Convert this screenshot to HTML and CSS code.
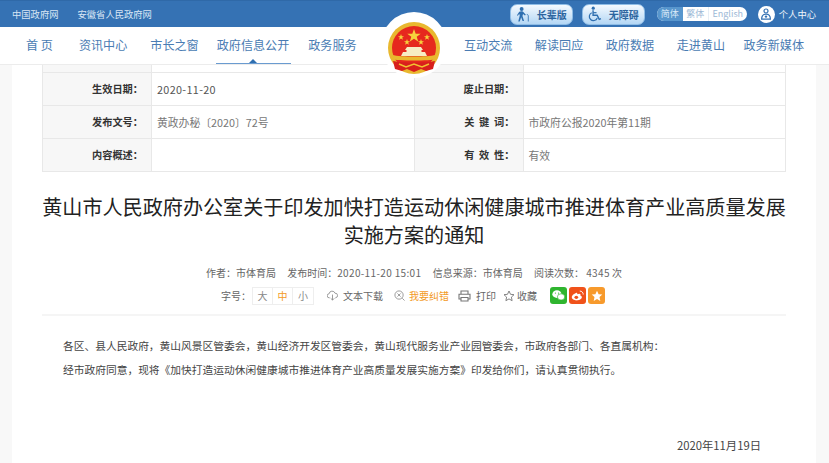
FILE: index.html
```html
<!DOCTYPE html>
<html lang="zh-CN">
<head>
  <meta charset="UTF-8" />
  <title>黄山市人民政府</title>
  <link rel="stylesheet" href="styles.css">
</head>
<body>
  <header class="header">
    <div class="topbar">
      <div class="top-links">
        <a>中国政府网</a>
        <a>安徽省人民政府网</a>
      </div>
      <div class="top-tools">
        <a class="care-btn">
          <svg viewBox="0 0 16 16" width="15" height="16"><circle cx="6" cy="2.6" r="2.1" fill="#2f6fb0"/><path d="M3.5 5.500c2-1 4-.6 4.800 1l2.200 2.300-1 .8-2-1.600-.6 2 1.700 5.400H7L5.500 11.500 4 16H2.400L4 9.500 3.400 7.600 2 9.800 1 9.200z" fill="#2f6fb0"/><path d="M11.500 8.500c1.200 0 1.600.7 1.600 1.600V16" fill="none" stroke="#2f6fb0" stroke-width=".9"/></svg>
          <span>长辈版</span>
        </a>
        <a class="care-btn">
          <svg viewBox="0 0 16 16" width="15" height="16"><circle cx="5.600" cy="1.800" r="1.700" fill="#2f6fb0"/><path d="M5.400 4v5.400h4.400l2.200 4.400 1.800-.8" fill="none" stroke="#2f6fb0" stroke-width="1.500"/><path d="M5.500 6.600h3.600" fill="none" stroke="#2f6fb0" stroke-width="1.300"/><path d="M4 6.600a4.400 4.400 0 1 0 5.900 5.600" fill="none" stroke="#2f6fb0" stroke-width="1.300"/></svg>
          <span>无障碍</span>
        </a>
        <div class="lang">
          <span class="lang-item lang-on">简体</span>
          <span class="lang-item">繁体</span>
          <span class="lang-item lang-en">English</span>
        </div>
        <a class="user">
          <span class="user-icon">
            <svg viewBox="0 0 12 12" width="12" height="12"><circle cx="6" cy="3" r="2" fill="none" stroke="#3572b4" stroke-width="1.200"/><path d="M1.600 11.200c0-3 1.600-5 4.400-5s4.400 2 4.400 5z" fill="none" stroke="#3572b4" stroke-width="1.200"/><circle cx="6" cy="8.600" r="1.200" fill="#3572b4"/></svg>
          </span>
          <span>个人中心</span>
        </a>
      </div>
    </div>
    <nav class="nav">
      <div class="nav-group nav-left">
        <a class="nav-item">首 页</a>
        <a class="nav-item">资讯中心</a>
        <a class="nav-item">市长之窗</a>
        <a class="nav-item nav-tight nav-active">政府信息公开</a>
        <a class="nav-item nav-tight">政务服务</a>
      </div>
      <div class="nav-group nav-right">
        <a class="nav-item">互动交流</a>
        <a class="nav-item">解读回应</a>
        <a class="nav-item">政府数据</a>
        <a class="nav-item">走进黄山</a>
        <a class="nav-item nav-tight">政务新媒体</a>
      </div>
    </nav>
    <div class="emblem">
      <svg viewBox="0 0 54 52" width="54" height="52">
        <circle cx="27" cy="26" r="26" fill="#e9b82f"/>
        <circle cx="27" cy="26" r="22" fill="#e6281e"/>
        <polygon points="27,7 28.700,11.800 33.700,11.800 29.700,14.800 31.200,19.600 27,16.700 22.800,19.600 24.300,14.800 20.300,11.800 25.300,11.800" fill="#f6d23c"/>
        <polygon points="14,12 14.800,14.200 17.100,14.200 15.200,15.600 15.900,17.800 14,16.500 12.100,17.800 12.800,15.600 10.900,14.200 13.200,14.200" fill="#f6d23c"/>
        <polygon points="40,12 40.800,14.200 43.100,14.200 41.200,15.600 41.900,17.800 40,16.500 38.100,17.800 38.800,15.600 36.900,14.200 39.200,14.200" fill="#f6d23c"/>
        <polygon points="20,17 20.800,19.200 23.100,19.200 21.200,20.600 21.900,22.800 20,21.500 18.100,22.800 18.800,20.600 16.900,19.200 19.200,19.200" fill="#f6d23c"/>
        <polygon points="34,17 34.800,19.200 37.100,19.200 35.200,20.600 35.900,22.800 34,21.500 32.100,22.800 32.800,20.600 30.900,19.200 33.200,19.200" fill="#f6d23c"/>
        <path d="M20 25h14l2 3h-1.500v2H38l2 4H14l2-4h3.500v-2H18z" fill="#f7ecc4"/>
        <path d="M4 37c8 2 38 2 46 0l-1-4c-10 2-34 2-44 0z" fill="#e9b82f"/>
        <path d="M6 39c8 2 34 2 42 0l-2 8-7 2-5-2-7 3-7-3-5 2-7-2z" fill="#d8201c"/>
        <path d="M12 42l7 3 8-3 8 3 7-3" fill="none" stroke="#f2c230" stroke-width="1.500"/>
      </svg>
    </div>
  </header>

  <main class="page">
    <table class="info">
      <tr class="info-cut"><td class="lbl"></td><td></td><td class="lbl"></td><td></td></tr>
      <tr><td class="lbl">生效日期：</td><td><span class="num">2020-11-20</span></td><td class="lbl">废止日期：</td><td></td></tr>
      <tr><td class="lbl">发布文号：</td><td class="soft">黄政办秘〔2020〕72号</td><td class="lbl">关 键 词：</td><td class="soft">市政府公报2020年第11期</td></tr>
      <tr><td class="lbl">内容概述：</td><td></td><td class="lbl">有 效 性：</td><td class="soft">有效</td></tr>
    </table>

    <h1 class="title">黄山市人民政府办公室关于印发加快打造运动休闲健康城市推进体育产业高质量发展实施方案的通知</h1>

    <div class="meta">
      <span>作者：市体育局</span>
      <span>发布时间：<span class="num">2020-11-20 15:01</span></span>
      <span>信息来源：市体育局</span>
      <span>阅读次数：&nbsp;<span class="num">4345</span> 次</span>
    </div>

    <div class="tools">
      <span>字号：</span>
      <div class="sizes">
        <span>大</span>
        <span class="size-on">中</span>
        <span>小</span>
      </div>
      <a class="tool tool-down">
        <svg viewBox="0 0 12 12" width="11" height="11"><path d="M3 8.500H2.500a2.200 2.200 0 0 1-.2-4.400 3.300 3.300 0 0 1 6.400-.6 2.500 2.500 0 0 1 .6 5H9M6 5v6M4 9l2 2 2-2" fill="none" stroke="#888" stroke-width=".9"/></svg>
        文本下载
      </a>
      <a class="tool tool-err">
        <svg viewBox="0 0 12 12" width="11" height="11"><circle cx="5.500" cy="5.500" r="4.500" fill="none" stroke="#888" stroke-width=".9"/><path d="M3.800 3.800l3.400 3.400M7.200 3.800L3.800 7.200M9 9l2.500 2.500" fill="none" stroke="#888" stroke-width=".9"/></svg>
        <span class="orange">我要纠错</span>
      </a>
      <a class="tool tool-print">
        <svg viewBox="0 0 13 12" width="13" height="12"><path d="M3 4V1h7v3M3 9H1V4.200h11V9h-2M3 7.500h7V11H3z" fill="none" stroke="#777" stroke-width="1.100"/></svg>
        打印
      </a>
      <a class="tool tool-fav">
        <svg viewBox="0 0 12 12" width="12" height="12"><polygon points="6,1 7.500,4.300 11,4.700 8.400,7.100 9.100,10.700 6,8.900 2.900,10.700 3.600,7.100 1,4.700 4.500,4.300" fill="none" stroke="#777" stroke-width=".9"/></svg>
        收藏
      </a>
      <div class="share">
        <span class="share-btn share-wx">
          <svg viewBox="0 0 14 12" width="13" height="11"><ellipse cx="5.300" cy="4.500" rx="5" ry="4.200" fill="#fff"/><ellipse cx="9.800" cy="7.500" rx="4" ry="3.400" fill="#fff" stroke="#2fb52f" stroke-width=".7"/><circle cx="3.600" cy="3.400" r=".6" fill="#2fb52f"/><circle cx="7" cy="3.400" r=".6" fill="#2fb52f"/></svg>
        </span>
        <span class="share-btn share-wb">
          <svg viewBox="0 0 14 12" width="13" height="11"><path d="M5.800 3C3 4 .5 6.300.8 8.300c.3 2 2.800 3.200 5.600 3 3-.3 5.600-1.700 5.300-3.800-.2-1-1-1.300-1.600-1.500.5-1.300 0-2.200-1.500-2-1 .1-1.500.6-1.700.6-.3 0 .3-2-1.100-1.600z" fill="#fff"/><ellipse cx="5.700" cy="8" rx="2" ry="1.700" fill="#f0521a"/><path d="M9.500 1.200a3.500 3.500 0 0 1 3.700 3.800" fill="none" stroke="#fff" stroke-width="1"/></svg>
        </span>
        <span class="share-btn share-qz">
          <svg viewBox="0 0 12 12" width="12" height="12"><polygon points="6,.8 7.600,4.200 11.300,4.600 8.500,7.100 9.300,10.900 6,9 2.700,10.900 3.500,7.100 .7,4.600 4.400,4.200" fill="#fff"/></svg>
        </span>
      </div>
    </div>

    <div class="article">
      <p>各区、县人民政府，黄山风景区管委会，黄山经济开发区管委会，黄山现代服务业产业园管委会，市政府各部门、各直属机构：</p>
      <p>经市政府同意，现将《加快打造运动休闲健康城市推进体育产业高质量发展实施方案》印发给你们，请认真贯彻执行。</p>
      <p class="sign">2020年11月19日</p>
    </div>
  </main>
</body>
</html>
```
FILE: styles.css
```css
* {
  box-sizing: border-box;
}

html, body {
  height: 463px;
  overflow: hidden;
}

body {
  margin: 0;
  background: #f8f8f8;
  color: #444;
  font-family: "Noto Sans CJK SC", "Noto Sans", sans-serif;
}

.num {
  letter-spacing: .35px;
}

.header {
  position: relative;
  background: #fff;
  border-bottom: 1px solid #ececec;
  height: 65px;
}

/* top blue strip */
.topbar {
  height: 27px;
  background: #3572b4;
  border-top: 1px solid #2f69a8;
  display: flex;
  justify-content: space-between;
  align-items: center;
  padding: 0 13px 0 12px;
}

.top-links {
  display: flex;
  gap: 19px;
  font-size: 9.3px;
  color: #d9e6f4;
}

.top-tools {
  display: flex;
  align-items: center;
}

.care-btn {
  width: 63px;
  height: 21px;
  margin-right: 9px;
  display: flex;
  align-items: center;
  justify-content: center;
  gap: 6px;
  border: 1px solid #8fbde6;
  border-radius: 7px;
  background: linear-gradient(#f4f9fe, #b4d7f5);
  color: #2d659f;
  font-size: 10px;
  font-weight: 700;
}

.lang {
  display: flex;
  height: 14px;
  margin: 0 11px 0 3px;
  border-radius: 7px;
  overflow: hidden;
  background: #fff;
  font-size: 9px;
  line-height: 14px;
  color: #9db9d6;
}

.lang-item {
  width: 26px;
  text-align: center;
  border-right: 1px solid #e6eef6;
}

.lang-on {
  background: #5896cd;
  color: #dcebf8;
  border-right: 0;
}

.lang-en {
  width: 38px;
  border-right: 0;
}

.user {
  display: flex;
  align-items: center;
  gap: 4px;
  font-size: 9.3px;
  color: #f0f5fb;
}

.user-icon {
  width: 17px;
  height: 17px;
  border-radius: 50%;
  background: #fff;
  display: flex;
  align-items: center;
  justify-content: center;
}

/* main nav */
.nav {
  height: 37px;
  display: flex;
  justify-content: space-between;
  padding: 0 25px 0 26px;
}

.nav-group {
  display: flex;
}

.nav-left {
  gap: 23px;
}

.nav-left .nav-item:nth-child(2) {
  margin-left: 3px;
}

.nav-right {
  gap: 22.5px;
}

.nav-item {
  position: relative;
  height: 37px;
  line-height: 36px;
  font-size: 12.1px;
  color: #4a7cb3;
  white-space: nowrap;
}

.nav-tight {
  margin-left: -4px;
}

.nav-active {
  margin-left: -5px;
}

.nav-active::after {
  content: "";
  position: absolute;
  left: -1px;
  right: -2px;
  bottom: 0;
  height: 1px;
  background: #6a9bd0;
}

.nav-active::before {
  content: "";
  position: absolute;
  left: 32px;
  bottom: 1px;
  border: 4px solid transparent;
  border-top: 0;
  border-bottom-color: #2f6fb0;
}

.emblem {
  position: absolute;
  left: 381px;
  top: 12px;
  width: 66px;
  height: 66px;
  border-radius: 50%;
  background: #fff;
  display: flex;
  justify-content: center;
  padding-top: 10px;
  z-index: 2;
}

/* article panel */
.page {
  margin: 0 13px 0 12px;
  padding: 0 30px;
  height: 398px;
  background: #fff;
}

.info {
  width: 744px;
  border-collapse: collapse;
  table-layout: fixed;
  font-size: 10.8px;
}

.info td {
  height: 33px;
  padding: 0 0 0 5px;
  border: 1px solid #e8e8e8;
  color: #555;
}

.info .lbl {
  width: 109px;
  padding: 0 8px 0 0;
  text-align: right;
  background: #f7f7f7;
  color: #333;
  font-size: 10.2px;
  font-weight: 700;
  word-spacing: 2.5px;
}

.info .soft {
  color: #777;
}

.info-cut td {
  height: 7px;
  border-top: 0;
}

.title {
  margin: 21px 0 0;
  font-size: 20.1px;
  font-weight: 400;
  line-height: 28px;
  text-align: center;
  color: #222;
}

.meta {
  margin-top: 16px;
  display: flex;
  justify-content: center;
  gap: 11.3px;
  font-size: 10px;
  line-height: 16px;
  color: #666;
}

.tools {
  height: 18px;
  margin-top: 6px;
  padding-left: 179px;
  display: flex;
  align-items: center;
  font-size: 10px;
  color: #666;
}

.sizes {
  display: flex;
  margin-left: 1px;
  border: 1px solid #eee;
  height: 18px;
  line-height: 16px;
  color: #888;
}

.sizes span {
  width: 20px;
  text-align: center;
  border-right: 1px solid #eee;
}

.sizes span:last-child {
  border-right: 0;
}

.sizes .size-on {
  color: #f39a1f;
}

.tool {
  display: flex;
  align-items: center;
  gap: 5px;
  white-space: nowrap;
}

.tool-down {
  margin-left: 13px;
}

.tool-err {
  margin-left: 11px;
  gap: 4px;
}

.tool-print {
  margin-left: 9px;
}

.tool-fav {
  margin-left: 7px;
  gap: 2px;
}

.orange {
  color: #f39a1f;
}

.share {
  display: flex;
  gap: 2px;
  margin-left: 13px;
}

.share-btn {
  width: 17px;
  height: 17px;
  border-radius: 3px;
  display: flex;
  align-items: center;
  justify-content: center;
}

.share-wx {
  background: #2fb52f;
}

.share-wb {
  background: #f0521a;
}

.share-qz {
  background: #f79a2c;
}

.article {
  margin-top: 9px;
  padding: 18px 25px 0 21px;
  border-top: 2px solid #f5f5f5;
  font-size: 10.74px;
  line-height: 24px;
  color: #444;
}

.article p {
  margin: 0;
}

.article .sign {
  padding-top: 51px;
  text-align: right;
  font-size: 11.3px;
}
```
